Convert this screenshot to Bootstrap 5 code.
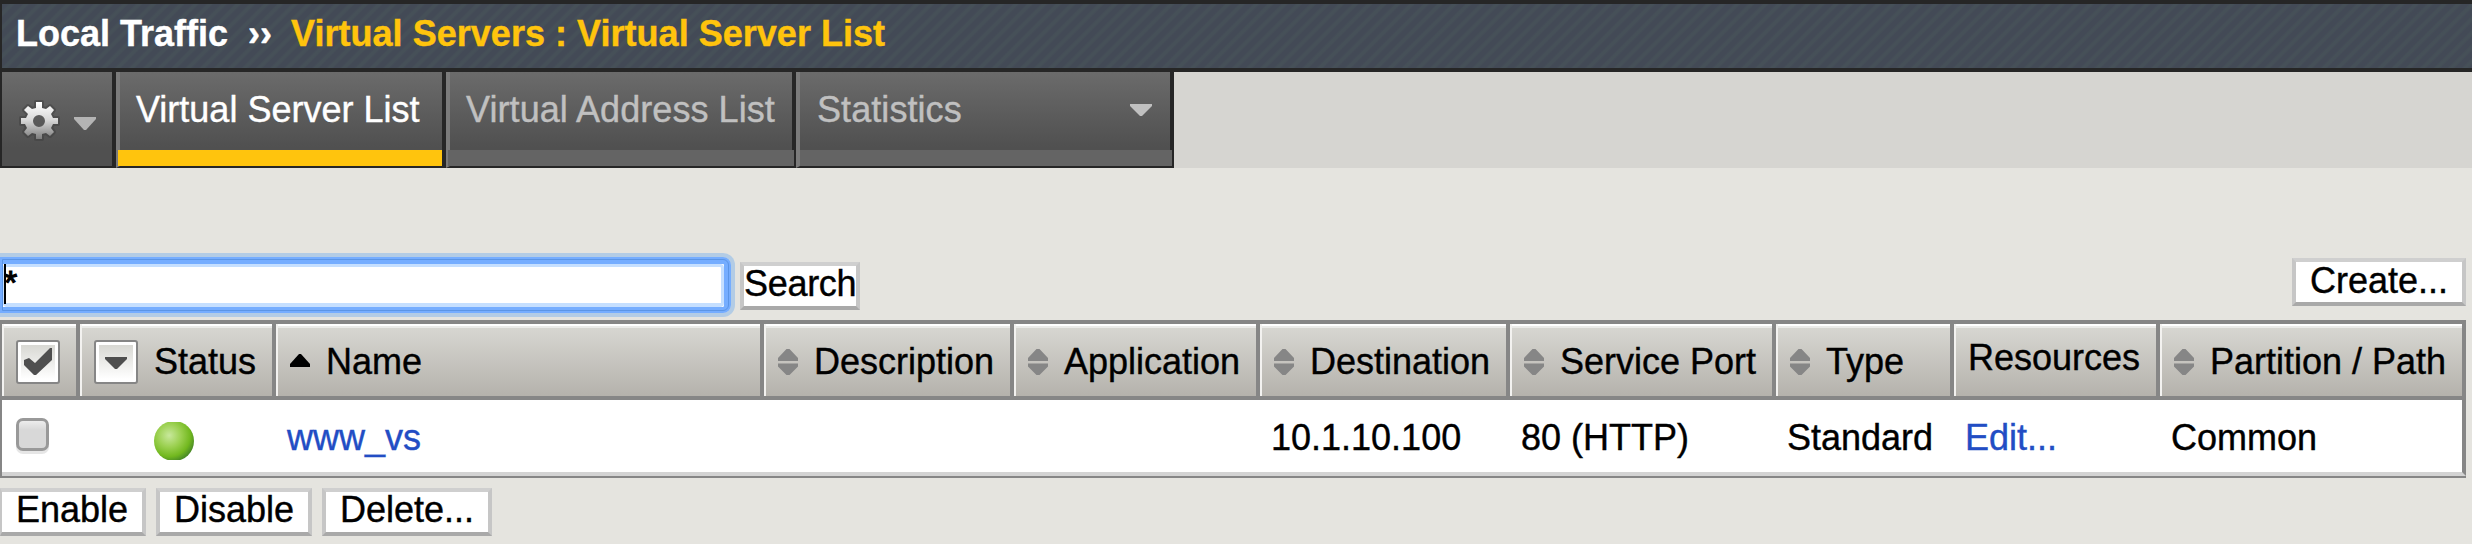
<!DOCTYPE html>
<html lang="en">
<head>
<meta charset="utf-8">
<title>Virtual Server List</title>
<link href="https://cdn.jsdelivr.net/npm/bootstrap@5.3.0/dist/css/bootstrap.min.css" rel="stylesheet">
<style>
body{background:#e5e4df;font-family:"Liberation Sans",Arial,sans-serif;font-size:36px;line-height:40px;color:#000;overflow:hidden;height:544px;-webkit-text-stroke:.4px}
svg{display:block;flex:none}
.titlebar{height:72px;border:solid #262626;border-width:4px 0 4px 2px;padding:0 0 5px 14px;font-weight:700;color:#fff;white-space:pre;
 background:repeating-linear-gradient(135deg,#434a56 0 4px,#465058 6px 8px,#434a56 10px)}
.titlebar .crumb{color:#ffc40d}
.tabstrip{height:96px;background:#d6d5d1}
.tabcell{height:96px;background:linear-gradient(#6b6b6b,#505050 80%);border-bottom:2px solid #262626;border-right:4px solid #262626;color:#c0c0c0}
.gearcell{width:116px;border-left:2px solid #262626;padding:0 0 0 18px}
.tabitem{border-left:4px solid #7b7b7b;display:flex;flex-direction:column}
.tabitem .lbl{height:78px;padding:0 16px 3px;white-space:nowrap;letter-spacing:.07px}
.tabitem .foot{height:16px;background:#646464;margin:0 -2px 0 -2px}
.tabitem.on{color:#fff}
.tabitem.on .foot{background:#ffc40d;margin-right:0}
.tools{height:152px;padding-top:85px;padding-right:6px}
.searchbox{width:735px;height:64px;border:4px solid #b3cce5;border-left:0;border-radius:0 12px 12px 0}
.ring{border:solid #75adff;border-width:7px 7px 6px 3px;border-radius:0 8px 8px 0;height:56px;width:731px;background:#fff;outline:1px solid #5b95e6;outline-offset:-3px}
.well{height:43px;border:solid #c5dfff;border-width:3px 3px 4px 1px;border-radius:4px}
.well input{border:0;outline:0;padding:0 0 6px;width:100%;height:36px;line-height:30px;font-size:34px;-webkit-text-stroke:1.2px;background:none;display:block;color:#000}
.caret{position:absolute;left:4px;top:7px;width:2px;height:40px;background:#000}
.bevel{background:#fff;border:4px solid;border-color:#cfcfcf #c6c6c6 #a9a9a9 #c6c6c6;border-radius:0;height:48px;line-height:35px;padding:0 0 5px;font-size:36px;color:#000;text-align:center;white-space:nowrap}
.grid{width:2466px;table-layout:fixed;border-collapse:separate;border-spacing:0;border-left:2px solid #868686;border-bottom:2px solid #868686}
.grid th{height:80px;padding:3px 0 0 14px;font-weight:400;border:4px solid #868686;border-left:0;white-space:nowrap;
 background:linear-gradient(#fff 0 2px,#ebebe9 2px 4px,#d7d6d1 4px,#b5b2ac);box-shadow:inset 2px 0 #f3f2f0;vertical-align:middle}
.grid td{height:76px;padding:3px 0 0 11px;background:#fff;border-bottom:4px solid #d3d3d3;vertical-align:middle}
.grid td:last-child{border-right:4px solid #868686}
.grid a{color:#224dc4;text-decoration:none}
.cap{margin-left:16px}
</style>
<script src="https://cdn.jsdelivr.net/npm/bootstrap@5.3.0/dist/js/bootstrap.bundle.min.js"></script>
</head>
<body>
<svg width="0" height="0" class="position-absolute">
 <defs>
  <linearGradient id="gg" x1="0" y1="0" x2="0" y2="1"><stop offset="0" stop-color="#fff"/><stop offset=".5" stop-color="#d6d6d6"/><stop offset="1" stop-color="#7c7c7c"/></linearGradient>
  <linearGradient id="bx" x1="0" y1="0" x2="0" y2="1"><stop offset="0" stop-color="#d8d8d3"/><stop offset="1" stop-color="#fff"/></linearGradient>
  <linearGradient id="cb" x1="0" y1="0" x2="0" y2="1"><stop offset="0" stop-color="#f0f0f0"/><stop offset=".35" stop-color="#d8d8d8"/><stop offset="1" stop-color="#d8d8d8"/></linearGradient>
  <radialGradient id="gr" cx=".38" cy=".36" r=".66"><stop offset="0" stop-color="#c8e89c"/><stop offset=".45" stop-color="#9bd050"/><stop offset=".8" stop-color="#72b81f"/><stop offset="1" stop-color="#4c8d26"/></radialGradient>
  <symbol id="sort" viewBox="0 0 20 26"><path fill="#868686" d="M8.500 0h3L20 9v3H0V9zM0 14.500h20v3L11.500 26h-3L0 17.500z"/></symbol>
 </defs>
</svg>
<header class="titlebar d-flex align-items-center"><span>Local Traffic</span><span style="margin-left:20px">››</span><span class="crumb" style="margin-left:19px;letter-spacing:.03px">Virtual Servers : Virtual Server List</span></header>
<nav class="tabstrip d-flex">
 <div class="tabcell gearcell d-flex">
  <svg width="38" height="40" viewBox="0 0 38 40" style="margin-top:29px" overflow="visible"><path fill="none" stroke="#3c3c3c" stroke-opacity=".45" stroke-width="4" stroke-linejoin="round" d="M16 1h6v6l4 1 4-3 4 4-3 4 2 4h5v6h-5l-2 4 3 4-4 4-4-3-4 1v5h-6v-5l-4-1-4 3-4-4 3-4-2-4H1v-6h5l2-4-4-4 4-4 4 3 4-1z"/><path fill="url(#gg)" fill-rule="evenodd" d="M16 1h6v6l4 1 4-3 4 4-3 4 2 4h5v6h-5l-2 4 3 4-4 4-4-3-4 1v5h-6v-5l-4-1-4 3-4-4 3-4-2-4H1v-6h5l2-4-4-4 4-4 4 3 4-1zM19 14a6 6 0 1 0 0 12 6 6 0 0 0 0-12z"/></svg>
  <svg width="22" height="13" viewBox="0 0 22 13" style="margin:45px 0 0 16px"><path fill="#b4b4b4" d="M0 0h22v2L12 13h-2L0 2z"/></svg>
 </div>
 <div class="tabcell tabitem on" style="width:330px"><div class="lbl d-flex align-items-center" style="letter-spacing:0">Virtual Server List</div><div class="foot"></div></div>
 <div class="tabcell tabitem" style="width:350px"><div class="lbl d-flex align-items-center">Virtual Address List</div><div class="foot"></div></div>
 <div class="tabcell tabitem" style="width:378px"><div class="lbl d-flex align-items-center justify-content-between" style="padding-left:17px">Statistics<svg width="22" height="12" viewBox="0 0 22 12" style="margin-right:2px"><path fill="#c0c0c0" d="M0 0h22v2L12 12h-2L0 2z"/></svg></div><div class="foot" style="margin-left:0"></div></div>
</nav>
<main>
 <div class="tools d-flex align-items-start">
  <div class="searchbox position-relative"><div class="ring"><div class="well"><input type="text" value="*"></div></div><i class="caret"></i></div>
  <button class="bevel" style="width:120px;margin:9px auto 0 5px;letter-spacing:-.3px">Search</button>
  <button class="bevel" style="width:174px;margin-top:5px;padding-bottom:3px">Create...</button>
 </div>
 <table class="grid">
  <colgroup><col style="width:78px"><col style="width:196px"><col style="width:488px"><col style="width:250px"><col style="width:246px"><col style="width:250px"><col style="width:266px"><col style="width:178px"><col style="width:206px"><col style="width:306px"></colgroup>
  <thead><tr>
   <th><svg width="44" height="44" viewBox="0 0 44 44"><rect x="1" y="1" width="42" height="42" rx="2" fill="#fff" stroke="#868686" stroke-width="2"/><rect x="5" y="5" width="34" height="34" fill="url(#bx)"/><path d="M8 20l5-2 6 5L34 8h2v12L20 35h-2L8 25z" fill="#4f4f4f"/></svg></th>
   <th><div class="d-flex align-items-center"><svg width="44" height="44" viewBox="0 0 44 44"><rect x="1" y="1" width="42" height="42" rx="2" fill="#fff" stroke="#868686" stroke-width="2"/><rect x="5" y="5" width="34" height="34" fill="url(#bx)"/><path d="M11 17h22v2L23 29h-2L11 19z" fill="#4f4f4f"/></svg><span class="cap">Status</span></div></th>
   <th><div class="d-flex align-items-center"><svg width="20" height="13" viewBox="0 0 20 13" style="margin-top:-3px"><path d="M9 0h2l9 10v3H0v-3z"/></svg><span class="cap">Name</span></div></th>
   <th><div class="d-flex align-items-center"><svg width="20" height="26"><use href="#sort"/></svg><span class="cap">Description</span></div></th>
   <th><div class="d-flex align-items-center"><svg width="20" height="26"><use href="#sort"/></svg><span class="cap">Application</span></div></th>
   <th><div class="d-flex align-items-center"><svg width="20" height="26"><use href="#sort"/></svg><span class="cap">Destination</span></div></th>
   <th><div class="d-flex align-items-center"><svg width="20" height="26"><use href="#sort"/></svg><span class="cap">Service Port</span></div></th>
   <th><div class="d-flex align-items-center"><svg width="20" height="26"><use href="#sort"/></svg><span class="cap">Type</span></div></th>
   <th style="padding:0 0 5px 14px">Resources</th>
   <th><div class="d-flex align-items-center"><svg width="20" height="26"><use href="#sort"/></svg><span class="cap">Partition / Path</span></div></th>
  </tr></thead>
  <tbody><tr>
   <td style="padding:0 0 0 14px"><svg width="33" height="36" viewBox="0 0 33 36"><rect y="4" width="33" height="32" rx="7" fill="#e6e6e6"/><rect x="1.500" y="1.500" width="30" height="30" rx="5.500" fill="url(#cb)" stroke="#999" stroke-width="3"/></svg></td>
   <td style="padding:10px 0 0 74px"><svg width="40" height="38" viewBox="0 0 40 38"><circle cx="20" cy="19" r="20" fill="url(#gr)"/></svg></td>
   <td><a href="#">www_vs</a></td><td></td><td></td><td>10.1.10.100</td><td>80 (HTTP)</td><td>Standard</td><td><a href="#">Edit...</a></td><td>Common</td>
  </tr></tbody>
 </table>
 <div class="d-flex" style="padding-top:10px;gap:10px">
  <button class="bevel" style="width:146px;border-left-width:2px">Enable</button>
  <button class="bevel" style="width:156px">Disable</button>
  <button class="bevel" style="width:170px">Delete...</button>
 </div>
</main>
</body>
</html>
